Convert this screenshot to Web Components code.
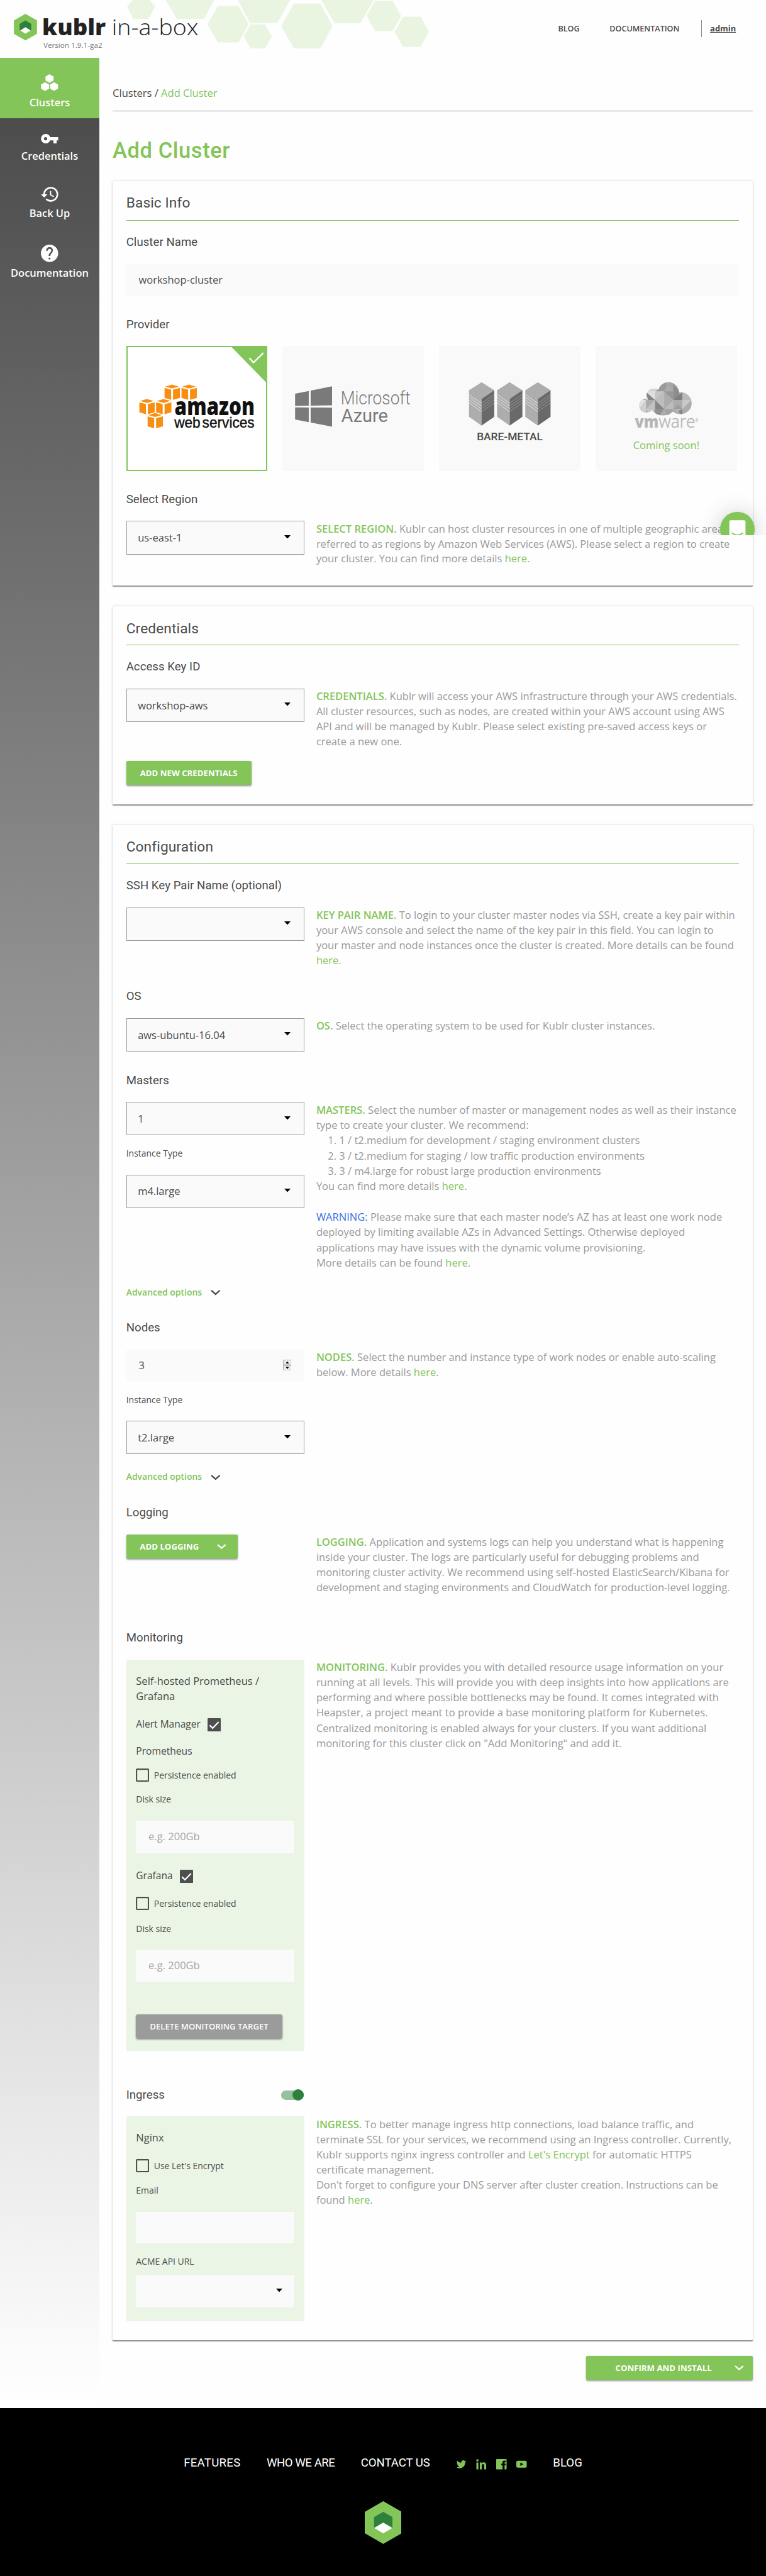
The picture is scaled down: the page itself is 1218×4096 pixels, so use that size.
<!DOCTYPE html>
<html lang="en">
<head>
<meta charset="utf-8">
<title>Kublr in-a-box: Add Cluster</title>
<style>
html{--green:#83c559;--dark:#4a4a4a;--pale:#eaf5e5}
body{margin:0;width:1218px;height:4096px;background:#fefefe;color:var(--dark);font:16.530px/23.880px "Open Sans","Noto Sans",sans-serif;position:relative}
</style>
</head>
<body>
<kb-header></kb-header>
<kb-shell>
  <kb-sidebar slot="side"></kb-sidebar>
  <kb-card heading="Basic Info" style="height:699px">
    <kb-label style="margin-top:24px">Cluster Name</kb-label>
    <kb-input value="workshop-cluster"></kb-input>
    <kb-label style="margin-top:36px">Provider</kb-label>
    <kb-providers></kb-providers>
    <kb-label style="margin-top:36px">Select Region</kb-label>
    <kb-row>
      <kb-select value="us-east-1"></kb-select>
      <kb-help slot="help" term="SELECT REGION." style="line-height:26px">Kublr can host cluster resources in one of multiple geographic areas<br>referred to as regions by Amazon Web Services (AWS). Please select a region to create<br>your cluster. You can find more details <a>here</a>.</kb-help>
    </kb-row>
  </kb-card>
  <kb-card heading="Credentials" style="height:343px;--head:24px">
    <kb-label style="margin-top:24.5px">Access Key ID</kb-label>
    <kb-row>
      <kb-select value="workshop-aws"></kb-select>
      <kb-button style="margin-top:67px;width:216.5px">ADD NEW CREDENTIALS</kb-button>
      <kb-help slot="help" term="CREDENTIALS." style="line-height:26px">Kublr will access your AWS infrastructure through your AWS credentials.<br>All cluster resources, such as nodes, are created within your AWS account using AWS<br>API and will be managed by Kublr. Please select existing pre-saved access keys or<br>create a new one.</kb-help>
    </kb-row>
  </kb-card>
  <kb-card heading="Configuration" style="height:2623.4px">
    <kb-label style="margin-top:24px">SSH Key Pair Name (optional)</kb-label>
    <kb-row style="height:141.3px">
      <kb-select></kb-select>
      <kb-help slot="help" term="KEY PAIR NAME.">To login to your cluster master nodes via SSH, create a key pair within<br>your AWS console and select the name of the key pair in this field. You can login to<br>your master and node instances once the cluster is created. More details can be found<br><a>here</a>.</kb-help>
    </kb-row>
    <kb-label>OS</kb-label>
    <kb-row style="height:94.6px">
      <kb-select value="aws-ubuntu-16.04"></kb-select>
      <kb-help slot="help" term="OS.">Select the operating system to be used for Kublr cluster instances.</kb-help>
    </kb-row>
    <kb-label>Masters</kb-label>
    <kb-row style="height:378px">
      <kb-select value="1"></kb-select>
      <kb-caption style="margin-top:21.6px">Instance Type</kb-caption>
      <kb-select value="m4.large" style="margin-top:26px"></kb-select>
      <kb-advanced style="margin-top:136px"></kb-advanced>
      <kb-help slot="help" term="MASTERS." style="line-height:26.5px">Select the number of master or management nodes as well as their instance<br>type to create your cluster. We recommend:<br><i>1. 1 / t2.medium for development / staging environment clusters</i><i>2. 3 / t2.medium for staging / low traffic production environments</i><i>3. 3 / m4.large for robust large production environments</i>You can find more details <a>here</a>.<br><br><b>WARNING:</b> Please make sure that each master node’s AZ has at least one work node<br>deployed by limiting available AZs in Advanced Settings. Otherwise deployed<br>applications may have issues with the dynamic volume provisioning.<br>More details can be found <a>here</a>.</kb-help>
    </kb-row>
    <kb-label>Nodes</kb-label>
    <kb-row style="height:269.3px">
      <kb-input value="3" spinner style="height:55px"></kb-input>
      <kb-caption style="margin-top:22.3px">Instance Type</kb-caption>
      <kb-select value="t2.large" style="margin-top:26px"></kb-select>
      <kb-advanced style="margin-top:29.5px"></kb-advanced>
      <kb-help slot="help" term="NODES.">Select the number and instance type of work nodes or enable auto-scaling<br>below. More details <a>here</a>.</kb-help>
    </kb-row>
    <kb-label>Logging</kb-label>
    <kb-row style="height:166.3px">
      <kb-button chevron style="width:193px">ADD LOGGING</kb-button>
      <kb-help slot="help" term="LOGGING." style="line-height:26px">Application and systems logs can help you understand what is happening<br>inside your cluster. The logs are particularly useful for debugging problems and<br>monitoring cluster activity. We recommend using self-hosted ElasticSearch/Kibana for<br>development and staging environments and CloudWatch for production-level logging.</kb-help>
    </kb-row>
    <kb-label>Monitoring</kb-label>
    <kb-row style="height:740.3px">
      <kb-panel style="height:677.7px">
        <kb-text>Self-hosted Prometheus /<br>Grafana</kb-text>
        <kb-check checked before style="margin-top:25px">Alert Manager</kb-check>
        <kb-text style="margin-top:21.4px;font-size:17px;line-height:24px">Prometheus</kb-text>
        <kb-check style="margin-top:17.6px">Persistence enabled</kb-check>
        <kb-caption style="margin-top:20.5px">Disk size</kb-caption>
        <kb-input hint="e.g. 200Gb" style="margin-top:26.5px"></kb-input>
        <kb-check checked before style="margin-top:29px">Grafana</kb-check>
        <kb-check style="margin-top:23px">Persistence enabled</kb-check>
        <kb-caption style="margin-top:21px">Disk size</kb-caption>
        <kb-input hint="e.g. 200Gb" style="margin-top:26px"></kb-input>
        <kb-button muted style="margin-top:56px;width:253px">DELETE MONITORING TARGET</kb-button>
      </kb-panel>
      <kb-help slot="help" term="MONITORING.">Kublr provides you with detailed resource usage information on your<br>running at all levels. This will provide you with deep insights into how applications are<br>performing and where possible bottlenecks may be found. It comes integrated with<br>Heapster, a project meant to provide a base monitoring platform for Kubernetes.<br>Centralized monitoring is enabled always for your clusters. If you want additional<br>monitoring for this cluster click on "Add Monitoring" and add it.</kb-help>
    </kb-row>
    <kb-label toggle>Ingress</kb-label>
    <kb-row>
      <kb-panel style="height:354px">
        <kb-text>Nginx</kb-text>
        <kb-check style="margin-top:24px">Use Let's Encrypt</kb-check>
        <kb-caption style="margin-top:20px">Email</kb-caption>
        <kb-input style="margin-top:27px;height:55px"></kb-input>
        <kb-caption style="margin-top:21px">ACME API URL</kb-caption>
        <kb-select plain style="margin-top:14px"></kb-select>
      </kb-panel>
      <kb-help slot="help" term="INGRESS.">To better manage ingress http connections, load balance traffic, and<br>terminate SSL for your services, we recommend using an Ingress controller. Currently,<br>Kublr supports nginx ingress controller and <a>Let's Encrypt</a> for automatic HTTPS<br>certificate management.<br>Don't forget to configure your DNS server after cluster creation. Instructions can be<br>found <a>here</a>.</kb-help>
    </kb-row>
  </kb-card>
  <kb-button slot="action" chevron wide style="width:288px">CONFIRM AND INSTALL</kb-button>
</kb-shell>
<kb-footer></kb-footer>
<kb-chat></kb-chat>

<script>
// Design lengths are written for a 1326px canvas; the window is 1218px wide.
const RATIO = 1218 / 1326;
const fit = text => text.replace(/([\d.]+)px/g, (m, n) => (n * RATIO).toFixed(3) + 'px');

function define(name, template) {
  customElements.define(name, class extends HTMLElement {
    constructor() {
      super();
      this.attachShadow({ mode: 'open' });
    }
    connectedCallback() {
      if (this.shadowRoot.childNodes.length) return;
      const attr = key => this.getAttribute(key) || '';
      if (this.hasAttribute('style')) this.setAttribute('style', fit(attr('style')));
      this.shadowRoot.innerHTML = fit(typeof template === 'function' ? template(attr, this) : template);
    }
  });
}

const chevron = (color, w = 17) => `<svg width="${w}px" height="9px" viewBox="0 0 17 9" fill="none" stroke="${color}" stroke-width="2.6"><path d="M1.2 1 8.5 7.4 15.8 1"/></svg>`;

define('kb-header', `
<style>
:host{display:flex;height:100px;position:relative}
svg{display:block}
nav{margin-left:auto;padding:36.5px 52px 0 0;display:flex;font-size:13.7px;font-weight:600;line-height:26px}
.doc{margin-left:52px}
.admin{margin-left:38px;border-left:1.1px solid #8a8a8a;padding-left:14px;height:29px;margin-top:-1.5px;padding-top:1.5px;box-sizing:border-box;font-size:14.1px;font-weight:700;text-decoration:underline}
</style>
<svg width="760px" height="100px" viewBox="0 0 760 100">
  <g fill="#e9f5e1" transform="scale(.48472 .35714)">
    <path d="M474 0H534L554 33 530 92H476L454 33Z"/>
    <path d="M592 0H765L728 93H632Z"/>
    <path d="M778 29H852L888 117 852 206H778L741 117Z"/>
    <path d="M849 0H1036L991 111H893Z"/>
    <path d="M895 118H946L971 177 946 235H895L871 177Z"/>
    <path d="M1050 17H1144L1188 127 1144 235H1050L1004 127Z"/>
    <path d="M1147 0H1335L1288 112H1195Z"/>
    <path d="M1340 4H1402L1433 77 1402 151H1340L1309 77Z"/>
    <path d="M1440 81H1502L1532 155 1502 228H1440L1409 155Z"/>
  </g>
  <path fill="#83c559" d="M44 24 64 35.5V58.500L44 70 24 58.500V35.500Z"/>
  <path fill="#2e813c" d="M44 35.500 54 41.500V53L44 47.500 34 53V41.500Z"/>
  <path fill="#fff" d="M44 47 53 52.800 44 58.300 35 52.800Z"/>
  <g font-family="Open Sans" fill="#222">
    <text x="73" y="61.300" font-size="38.500" font-weight="800" textLength="110" lengthAdjust="spacingAndGlyphs">kublr</text>
    <text x="193.500" y="61.300" font-size="38.500" font-weight="300" textLength="150" lengthAdjust="spacingAndGlyphs">in-a-box</text>
    <text x="75" y="83" font-size="12.600" fill="#777" textLength="102" lengthAdjust="spacingAndGlyphs">Version 1.9.1-ga2</text>
  </g>
</svg>
<nav><span>BLOG</span><span class="doc">DOCUMENTATION</span><span class="admin">admin</span></nav>`);

define('kb-shell', `
<style>
:host{display:flex;height:4068px}
main{flex:1;padding:48px 23px 0;min-width:0}
.crumbs{padding-bottom:18px;border-bottom:1.1px solid #999;height:26px}
.crumbs span{color:var(--green)}
h1{margin:45.5px 0 31.5px;font:500 37.6px/44px Roboto,sans-serif;letter-spacing:.6px;color:var(--green)}
.cards{display:flex;flex-direction:column;gap:36px}
.action{display:flex;justify-content:flex-end;padding-top:26.6px}
</style>
<slot name="side"></slot>
<main>
  <div class="crumbs">Clusters / <span>Add Cluster</span></div>
  <h1>Add Cluster</h1>
  <div class="cards"><slot></slot></div>
  <div class="action"><slot name="action"></slot></div>
</main>`);

define('kb-sidebar', `
<style>
:host{display:block;width:172px;background:linear-gradient(#484848,#fff)}
div{display:flex;flex-direction:column;align-items:center;box-sizing:border-box;color:#fff;font-size:17.9px;font-weight:600;line-height:26px}
svg{display:block;width:30px}
</style>
<div style="height:105px;background:var(--green);padding-top:28px"><svg height="29px" viewBox="0 0 30 29" fill="#fff" style="margin-bottom:7px"><path d="M15 0 22 4V11L15 15 8 11V4Z"/><path d="M7.200 14 14.200 18V25L7.200 29 .2 25V18Z"/><path d="M22.800 14 29.800 18V25L22.800 29 15.800 25V18Z"/></svg>Clusters</div>
<div style="height:91px;padding-top:27px"><svg height="17px" viewBox="0 0 30 17" fill="#fff" style="margin-bottom:8px"><path fill-rule="evenodd" d="M8.200 0A8.200 8.200 0 1 0 16 11.200H21.800V16.400H27.300V11.200H30V5.500H16A8.200 8.200 0 0 0 8.200 0ZM8.200 5.500A2.800 2.800 0 1 1 8.200 11.100 2.800 2.800 0 0 1 8.200 5.500Z"/></svg>Credentials</div>
<div style="height:102px;padding-top:27px"><svg height="26px" viewBox="1 3 21 18" fill="#fff" style="margin-bottom:7px"><path d="M13 3a9 9 0 0 0-9 9H1l3.890 3.890.070.140L9 12H6a7 7 0 1 1 2.060 4.940l-1.420 1.420A9 9 0 1 0 13 3zm-1 5v5l4.280 2.540.720-1.210-3.500-2.080V8z"/></svg>Back Up</div>
<div style="height:110px;padding-top:26px"><svg height="30px" viewBox="2 2 20 20" fill="#fff" style="margin-bottom:6px"><path d="M12 2a10 10 0 1 0 0 20 10 10 0 0 0 0-20zm1 17h-2v-2h2zm2.070-7.750-.9.920C13.450 12.900 13 13.500 13 15h-2v-.5c0-1.100.450-2.100 1.170-2.830l1.240-1.260A2 2 0 1 0 10 9H8a4 4 0 1 1 7.070 2.250z"/></svg>Documentation</div>`);

define('kb-card', attr => `
<style>
:host{display:block;box-sizing:border-box;padding:0 23.500px;border-radius:2px;background:#fefefe;box-shadow:0 1.500px 1px rgba(0,0,0,.34),0 1px 4px rgba(0,0,0,.2)}
h2{margin:0;height:68px;box-sizing:border-box;padding-top:var(--head,22.800px);border-bottom:1.100px solid var(--green);font:400 24.700px/30px Roboto,sans-serif;letter-spacing:.13px}
</style>
<h2>${attr('heading')}</h2><slot></slot>`);

define('kb-label', (attr, el) => `
<style>
:host{display:flex;justify-content:space-between;width:307.500px;height:26px;padding-top:1px;padding-bottom:23.600px;font:400 20.300px/26px Roboto,sans-serif;letter-spacing:.04px;white-space:nowrap}
.track{width:34px;height:16px;margin-top:4.500px;border-radius:8px;background:#97c09e;display:flex;align-items:center;justify-content:flex-end;box-sizing:border-box}
.knob{width:20px;height:20px;flex:none;border-radius:50%;background:#2e813c}
</style>
<slot></slot>${el.hasAttribute('toggle') ? '<span class="track" style="width:39px"><span class="knob"></span></span>' : ''}`);

define('kb-row', `
<style>
:host{display:grid;grid-template-columns:308px 1fr;column-gap:21px;align-items:start}
</style>
<div><slot></slot></div><slot name="help"></slot>`);

define('kb-help', attr => `
<style>
:host{display:block;color:#999;line-height:26.200px;white-space:nowrap;padding-top:.4px}
strong{font-weight:600;color:var(--green)}
::slotted(a){color:var(--green)}
::slotted(b){font-weight:400;color:#3a6fe0}
::slotted(i){display:block;font-style:normal;padding-left:20px}
</style>
<strong>${attr('term')}</strong> <slot></slot>`);

define('kb-select', attr => `
<style>
:host{display:flex;align-items:center;justify-content:space-between;box-sizing:border-box;height:58px;padding:0 22px 0 19px;background:#fafafa;border:1.100px solid #999}
:host([plain]){height:56px;border:0;padding-right:21px}
svg{display:block;margin-top:-3px}
</style>
<span>${attr('value')}</span><svg width="11px" height="6px" viewBox="0 0 11 6"><path d="M0 0H11L5.500 6Z"/></svg>`);

define('kb-input', (attr, el) => `
<style>
:host{display:flex;align-items:center;justify-content:space-between;box-sizing:border-box;height:56px;padding:0 22px 1px 21.500px;background:#fafafa}
.hint{color:#a5a5a5}
.spin{width:15px;height:19px;display:block}
</style>
<span class="${attr('value') ? '' : 'hint'}">${attr('value') || attr('hint')}</span>
${el.hasAttribute('spinner') ? '<svg class="spin" viewBox="0 0 15 19"><path d="M.5.500H14.500V9H.500ZM.500 10H14.500V18.500H.500Z" fill="#ececec" stroke="#a5a5a5"/><path d="M4.500 6.500 7.500 3 10.500 6.500ZM4.500 12.500H10.500L7.500 16Z"/></svg>' : ''}`);

define('kb-caption', `<style>:host{display:block;height:20px;font-size:15.200px;line-height:20px}</style><slot></slot>`);
define('kb-text', `<style>:host{display:block;line-height:26px}</style><slot></slot>`);

define('kb-advanced', `
<style>:host{display:flex;align-items:center;gap:15px;height:20px;font-size:15.200px;font-weight:600;line-height:20px;color:var(--green)}svg{display:block;margin-top:1px}</style>
<span>Advanced options</span>${chevron('#4a4a4a')}`);

define('kb-button', (attr, el) => `
<style>
:host{display:flex;align-items:center;justify-content:${el.hasAttribute('wide') ? 'flex-end' : el.hasAttribute('chevron') ? 'space-between' : 'center'};box-sizing:border-box;height:41.700px;padding:0 ${el.hasAttribute('wide') ? 15 : 20}px 0 23.500px;border-radius:2.500px;background:var(--green);color:#fff;font-size:14.400px;font-weight:700;line-height:20px;white-space:nowrap;box-shadow:0 1.500px 3px rgba(0,0,0,.4)}
:host(:not([chevron])){padding:0}
:host([muted]){background:#9b9b9b;font-weight:600;font-size:14.300px;border-radius:4px}
:host([wide]) svg{margin-left:40px}
svg{display:block}
</style>
<slot></slot>${el.hasAttribute('chevron') ? chevron('#fff', 16) : ''}`);

define('kb-panel', `
<style>:host{display:block;box-sizing:border-box;padding:24px 17px 0;background:var(--pale)}</style><slot></slot>`);

define('kb-check', (attr, el) => {
  const box = el.hasAttribute('checked')
    ? '<svg width="23px" height="23px" viewBox="0 0 23 23"><rect width="23" height="23" rx="1.500" fill="#4f4f4f"/><path d="M3.800 12.400 8.800 17.400 19.300 6.500" fill="none" stroke="#fff" stroke-width="2.500"/></svg>'
    : '<svg width="23px" height="23px" viewBox="0 0 23 23"><rect x="1.200" y="1.200" width="20.600" height="20.600" rx="1" fill="none" stroke="#4f4f4f" stroke-width="2.300"/></svg>';
  return `
<style>
:host{display:flex;align-items:flex-start;gap:8px;height:24px;font-size:15.200px;line-height:24px}
:host([before]){flex-direction:row-reverse;justify-content:flex-end;gap:12.500px;font-size:16.900px;line-height:20px}
svg{display:block}
</style>${box}<span><slot></slot></span>`;
});

define('kb-providers', () => {
  const cube = (x, y) => `<path transform="translate(${x} ${y})" d="M0 0 29 10 0 20-29 10ZM-32 17-4 26V79L-32 69ZM4 26 33 17V69L4 79Z"/>`;
  const stripes = [23, 37, 51, 66].map(d => `<path d="M144 ${410 + d} 204 ${455 + d}" stroke="#f2f2f2" stroke-width="2.500"/><path d="M204 ${455 + d} 264 ${410 + d}" stroke="#b0b0b0" stroke-width="2"/>`).join('');
  const server = x => `<g transform="translate(${x} 0)"><path fill="#adadad" d="M204 369 265 410 204 455V594L144 548V410Z"/><path fill="#696969" d="M265 410V548L204 594V455Z"/>${stripes}</g>`;
  return `
<style>
:host{display:grid;grid-template-columns:repeat(4,244.700px);column-gap:26.100px}
figure{margin:0;height:216px;background:#f9f9f9}
figure.on{background:#fff;outline:2.200px solid var(--green);outline-offset:-2.200px}
svg{display:block;width:244.700px;height:216px}
</style>
<figure class="on"><svg viewBox="0 0 245 216">
  <path fill="#83c559" d="M180.400 0H245V66Z"/><path d="M213 20.800 220.200 28.800 237.300 12" fill="none" stroke="#fff" stroke-width="2.700"/>
  <g fill="#f79012" transform="scale(.408163 .333333) translate(-93 -180)">${cube(287, 381)}${cube(359, 381)}${cube(180, 456)}${cube(251, 456)}${cube(215, 529)}</g>
  <g fill="#111"><text transform="translate(83.500 119.800) scale(.815 1)" font-family="Open Sans" font-weight="800" font-size="42">amazon</text>
  <text x="83" y="141.500" font-family="Liberation Sans" font-size="27" stroke="#111" stroke-width=".5" word-spacing="-4" textLength="139" lengthAdjust="spacingAndGlyphs">web services</text></g>
</svg></figure>
<figure><svg viewBox="0 0 245 216">
  <path fill="#7a7a7a" transform="scale(.408163 .333333) translate(-757 -180)" d="M811 428 869 414V490L811 492ZM877 412 968 390V489L877 490ZM811 499 869 500V576L811 562ZM877 500 968 501V600L877 578Z"/>
  <g font-family="Roboto" fill="#7a7a7a"><text x="101" y="101.700" font-size="32.500" font-weight="300" textLength="121" lengthAdjust="spacingAndGlyphs">Microsoft</text>
  <text x="102" y="132.300" font-size="32" textLength="81" lengthAdjust="spacingAndGlyphs">Azure</text></g>
</svg></figure>
<figure><svg viewBox="0 0 244.700 216">
  <g fill="none" transform="scale(.361 .333333) translate(0 -180)">${server(0)}${server(135)}${server(270)}</g>
  <text x="65.500" y="163.700" font-family="Roboto" font-weight="500" font-size="18" fill="#4a4a4a" textLength="114" lengthAdjust="spacingAndGlyphs">BARE-METAL</text>
</svg></figure>
<figure><svg viewBox="0 0 244.700 216">
  <defs><clipPath id="cloud"><ellipse cx="1098" cy="422" rx="50" ry="53"/><ellipse cx="1154" cy="478" rx="55" ry="57"/><ellipse cx="1028" cy="440" rx="37" ry="38"/><ellipse cx="992" cy="490" rx="35" ry="36"/><ellipse cx="1072" cy="492" rx="58" ry="50"/></clipPath></defs>
  <g transform="scale(.361 .333333) translate(-748 -180)"><g clip-path="url(#cloud)">
    <path fill="#acacac" d="M950 360H1215V550H950Z"/>
    <path fill="#d3d3d3" d="M990 400H1077V416L1033 461H990Z"/>
    <path fill="#e0e0e0" d="M990 416H1033V461Z"/>
    <path fill="#c6c6c6" d="M1033 416H1077V461H1033Z"/>
    <path fill="#bdbdbd" d="M1077 416V508L1033 461Z"/>
    <path fill="#9a9a9a" d="M1050 365H1100L1077 416H1040Z"/>
    <path fill="#a6a6a6" d="M1077 370H1121V416Z"/>
    <path fill="#8d8d8d" d="M1121 376 1150 416H1121ZM1121 416H1150V461H1121Z"/>
    <path fill="#989898" d="M1077 416H1121V461Z"/>
    <path fill="#858585" d="M990 420 1033 461H1000ZM1033 461 1077 508H1033Z"/>
    <path fill="#7f7f7f" d="M1121 461 1164 420V461Z"/>
    <path fill="#b9b9b9" d="M1164 416H1210V461H1164Z"/>
    <path fill="#e2e2e2" d="M950 461H990L957 508Z"/>
    <path fill="#cfcfcf" d="M957 508 990 461V530H957Z"/>
    <path fill="#c1c1c1" d="M990 508 1033 461V508Z"/>
    <path fill="#bcbcbc" d="M1077 508 1121 461V508Z"/>
    <path fill="#9b9b9b" d="M1121 508 1143 485 1164 508Z"/>
    <path fill="#c8c8c8" d="M1164 461H1208L1164 508ZM990 508H1033L1010 540Z"/>
    <path fill="#929292" d="M1033 508H1077L1055 540H1030Z"/>
    <path fill="#a2a2a2" d="M1077 508H1121L1095 545Z"/>
    <path fill="#b8b8b8" d="M1121 508H1164V540Z"/>
    <path fill="#848484" d="M1143 520 1164 508V540Z"/>
  </g></g>
  <g font-family="Open Sans" fill="#b5b5b5" font-size="29.500"><text x="68" y="141.700" font-weight="800" textLength="41" lengthAdjust="spacingAndGlyphs">vm</text>
  <text x="109.500" y="141.700" font-weight="300" stroke="#b5b5b5" stroke-width=".5" textLength="63" lengthAdjust="spacingAndGlyphs">ware</text>
  <text x="172" y="131.500" font-size="7">®</text></g>
  <text x="122.300" y="178.300" text-anchor="middle" font-size="18" font-family="Open Sans" fill="#83c559">Coming soon!</text>
</svg></figure>`;
});

define('kb-footer', `
<style>
:host{display:block;height:292px;background:#000;color:#fff;font:400 20.300px/26px Roboto,sans-serif;box-sizing:border-box;padding-top:83px}
nav{display:flex;justify-content:center;gap:45px;height:26px;white-space:nowrap}
.social{display:flex;gap:17px;padding-top:6px}
.social svg{width:18px;height:18px}
svg{display:block}
.mark{margin:53px auto 0}
</style>
<nav><span style="letter-spacing:.3px">FEATURES</span><span style="letter-spacing:-.5px">WHO WE ARE</span><span style="letter-spacing:-.1px">CONTACT US</span>
<span class="social">
  <svg viewBox="0 0 24 24" fill="#83c559"><path d="M23.500 5.200c-.8.400-1.700.6-2.600.7.900-.6 1.600-1.400 2-2.500-.9.500-1.800.9-2.900 1.100a4.600 4.600 0 0 0-7.800 4.200A13 13 0 0 1 2.800 3.900a4.600 4.600 0 0 0 1.400 6.100c-.7 0-1.400-.2-2-.6 0 2.200 1.500 4.100 3.600 4.600-.7.200-1.400.2-2.100.1.600 1.800 2.300 3.100 4.300 3.200A9.200 9.200 0 0 1 1.200 19.200a13 13 0 0 0 20-11.600c.9-.6 1.700-1.500 2.300-2.400z"/></svg>
  <svg viewBox="0 0 18 18" fill="#83c559"><circle cx="2.300" cy="2.300" r="2"/><path d="M.6 6H4V18H.600ZM6.500 6H9.700V7.700C11.500 4.800 17.500 4.600 17.500 11V18H14.100V11.500C14.100 7.600 9.900 8 9.900 11.500V18H6.500Z"/></svg>
  <svg viewBox="0 0 18 18" fill="#83c559"><path d="M1 0H17Q18 0 18 1V17Q18 18 17 18H14.500V11H16.400V8.200H14.500V6.500Q14.500 5.500 15.600 5.500H16.500V2.700H14.300Q11 2.700 11 6.200V8.200H8.800V11H11V18H1Q0 18 0 17V1Q0 0 1 0Z"/></svg>
  <svg viewBox="0 0 18 18" fill="#83c559"><path fill-rule="evenodd" d="M2.500 3H15.500Q18 3 18 5.500V12.500Q18 15 15.500 15H2.500Q0 15 0 12.500V5.500Q0 3 2.500 3ZM7 6V12L12 9Z"/></svg>
</span><span>BLOG</span></nav>
<svg class="mark" width="64px" height="74px" viewBox="0 0 64 74"><path fill="#83c559" d="M32 0 64 18.500V55.500L32 74 0 55.500V18.500Z"/><path fill="#2e813c" d="M32 18.500 48 27.500V46L32 37 16 46V27.500Z"/><path fill="#fff" d="M32 37.300 47.500 46.500 32 55.700 16.500 46.500Z"/></svg>`);

define('kb-chat', `
<style>
:host{display:block;position:absolute;left:1166px;top:790px;width:160px;height:136px;overflow:hidden}
div{width:60px;height:60px;margin:95.700px 0 0 80px;border-radius:50%;background:var(--green);box-shadow:0 1px 6px rgba(0,0,0,.08),0 2px 40px rgba(0,0,0,.2)}
svg{display:block;width:60px;height:60px}
</style>
<div><svg viewBox="0 0 60 60"><path fill="#fff" d="M18.500 14.500H41.500Q44 14.500 44 17V45H16V17Q16 14.500 18.500 14.500Z"/><path d="M20.500 36.500Q30 43.500 39.500 36.500" fill="none" stroke="#83c559" stroke-width="1.800" stroke-linecap="round"/></svg></div>`);
</script>
</body>
</html>
